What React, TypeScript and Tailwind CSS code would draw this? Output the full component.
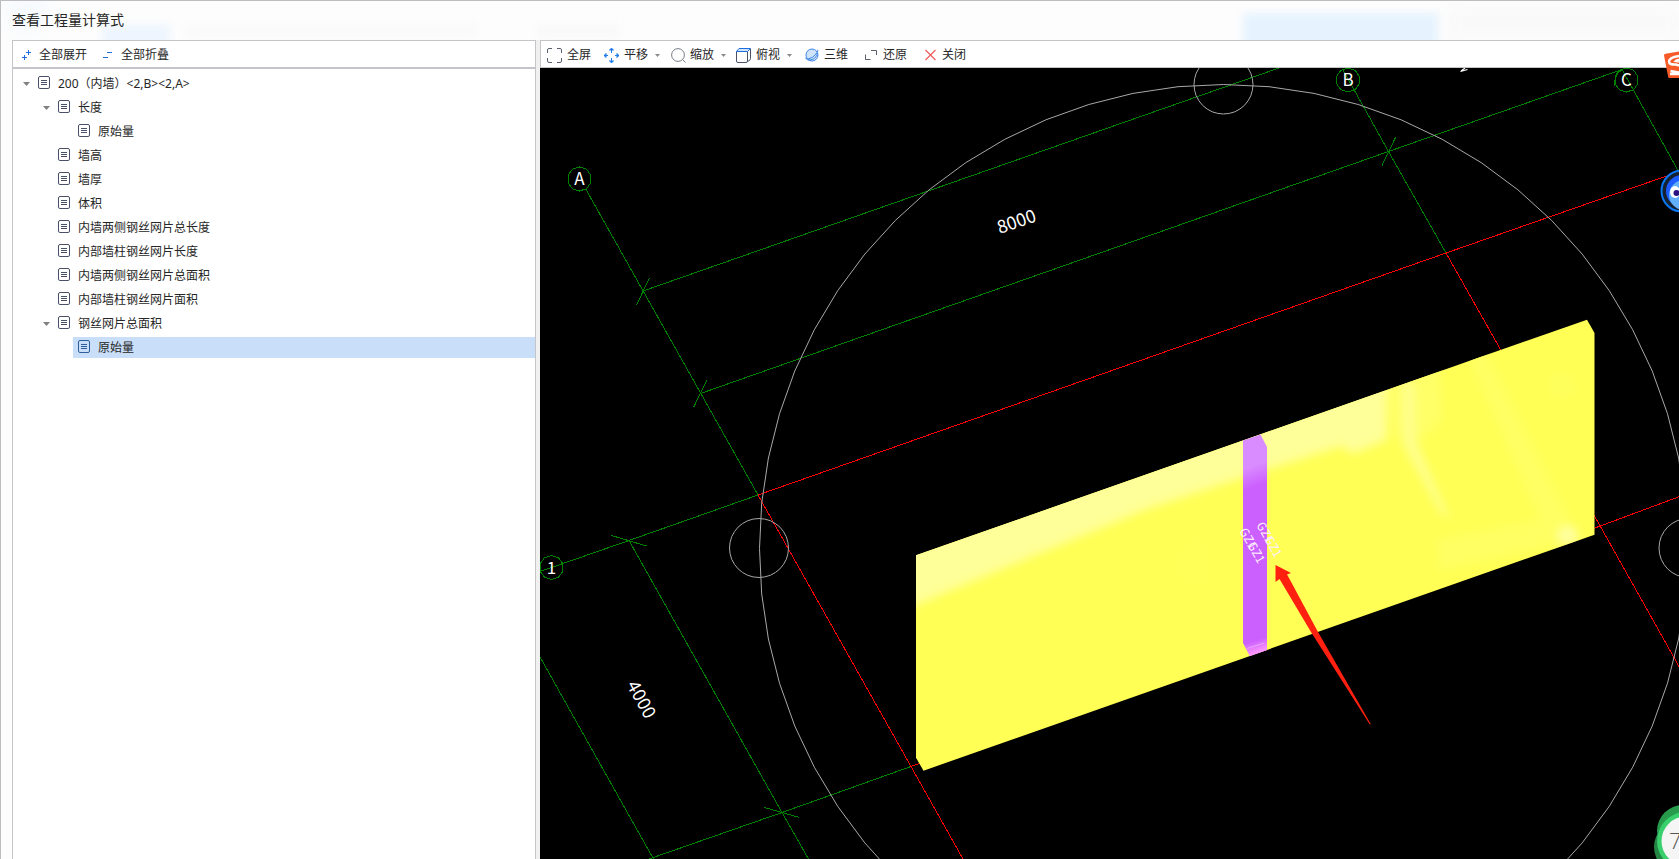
import React, { useState } from "react";

interface TreeNode {
  id: number;
  title: string;
  children?: TreeNode[];
}

const treeData: TreeNode[] = [
  {
    id: 1,
    title: "200（内墙）<2,B><2,A>",
    children: [
      { id: 2, title: "长度", children: [{ id: 3, title: "原始量" }] },
      { id: 4, title: "墙高" },
      { id: 5, title: "墙厚" },
      { id: 6, title: "体积" },
      { id: 7, title: "内墙两侧钢丝网片总长度" },
      { id: 8, title: "内部墙柱钢丝网片长度" },
      { id: 9, title: "内墙两侧钢丝网片总面积" },
      { id: 10, title: "内部墙柱钢丝网片面积" },
      { id: 11, title: "钢丝网片总面积", children: [{ id: 12, title: "原始量" }] },
    ],
  },
];

const parentIds = [1, 2, 11];

const FileIcon = ({ active }: { active: boolean }) => (
  <svg
    width="12"
    height="13"
    viewBox="0 0 12 13"
    fill="none"
    stroke={active ? "#2f5f9a" : "#4a5068"}
    className="mb-[2px] shrink-0"
  >
    <rect x="0.5" y="0.5" width="11" height="12" rx="1.5" />
    <path d="M3 4.5h6M3 6.5h6M3 8.5h6" />
  </svg>
);

const Caret = () => (
  <svg width="5" height="3" viewBox="0 0 5 3" fill="#8a8a8a" className="ml-[7px]">
    <path d="M0 0h5L2.5 3z" />
  </svg>
);

interface TreeItemProps {
  node: TreeNode;
  closed: number[];
  selected: number;
  onToggle: (id: number) => void;
  onSelect: (id: number) => void;
}
const TreeItem: React.FC<TreeItemProps> = (props) => {
  const { node, closed, selected, onToggle, onSelect } = props;
  const isOpen = !closed.includes(node.id);
  const isActive = selected === node.id;

  return (
    <li role="treeitem" aria-selected={isActive}>
      <div className="mb-[3px] flex h-[21px] items-center">
        <div className="flex w-5 shrink-0 justify-end">
          {node.children && (
            <button aria-label="toggle" className="py-1 pr-[3px]" onClick={() => onToggle(node.id)}>
              <svg width="7" height="4" viewBox="0 0 7 4" fill="#808080">
                <path d="M0 0h7L3.5 4z" />
              </svg>
            </button>
          )}
        </div>
        <button
          className={`flex h-full flex-1 items-center gap-2 pl-[5px] text-left ${
            isActive ? "bg-[#c9dff9]" : ""
          }`}
          onClick={() => onSelect(node.id)}
        >
          <FileIcon active={isActive} />
          <span className="whitespace-nowrap">{node.title}</span>
        </button>
      </div>
      {node.children && isOpen && (
        <ul role="group" className="pl-5">
          {node.children.map((child) => (
            <TreeItem {...props} key={child.id} node={child} />
          ))}
        </ul>
      )}
    </li>
  );
};

const Toolbar = () => (
  <div className="flex h-7 shrink-0 items-center border-y border-l border-[#c3c5c9] bg-white pt-[2px] pl-[6px]">
    <button className="mr-[13px] flex items-center gap-[5px]">
      <svg width="15" height="15" viewBox="0 0 15 15" fill="none" stroke="#5a5f6e">
        <path d="M.5 5V2Q.5.5 2 .5H5M10 .5h3Q14.500.5 14.500 2V5M14.500 10v3q0 1.500-1.500 1.500H10M5 14.500H2Q.5 14.500.5 13V10" />
      </svg>
      全屏
    </button>
    <button className="mr-[11px] flex items-center">
      <svg
        width="15"
        height="15"
        viewBox="0 0 15 15"
        fill="none"
        stroke="#1e7be8"
        className="mr-[5px]"
      >
        <path d="M5.500 2.500l2-2 2 2M5.500 12.500l2 2 2-2M2.500 5.500l-2 2 2 2M12.500 5.500l2 2-2 2" strokeWidth="1.300" />
        <path d="M7.500 1v4M7.500 10v4M1 7.500h3M11 7.500h3" />
      </svg>
      平移
      <Caret />
    </button>
    <button className="mr-[10px] flex items-center">
      <svg
        width="15"
        height="15"
        viewBox="0 0 15 15"
        fill="none"
        stroke="#777d88"
        className="mr-1"
      >
        <circle cx="7" cy="7" r="6.400" />
        <path d="M11.500 11.500l3 3" />
      </svg>
      缩放
      <Caret />
    </button>
    <button className="mr-[13px] flex items-center">
      <svg
        width="15"
        height="15"
        viewBox="0 0 15 15"
        fill="none"
        stroke="#4a5068"
        className="mr-[5px]"
      >
        <path d="M.5 3.500h11v9.500q0 1.500-1.500 1.500H2Q.5 14.500.5 13zM11.500 13.500q3-1 3-3V1" />
        <path d="M.5 3.500L3 .5h11.500l-3 3z" fill="#cfe3fb" stroke="#1e6fdc" />
      </svg>
      俯视
      <Caret />
    </button>
    <button className="mr-[17px] flex items-center gap-[5px]">
      <svg width="14" height="14" viewBox="0 0 14 14" fill="none" stroke="#3f86e6">
        <circle cx="7" cy="7" r="6" fill="#cfe3fb" />
        <path d="M1 9.500q-1 2 2 1.500Q8 10 11 6T12.500 2" />
        <path d="M2.500 12Q10 12.500 12.500 6" />
      </svg>
      三维
    </button>
    <button className="mr-[18px] flex items-center gap-[6px]">
      <svg width="12" height="12" viewBox="0 0 12 12" fill="none" stroke="#5a5f6e">
        <path d="M.5 5.500v5h5M6 1.500h5.500V6" />
      </svg>
      还原
    </button>
    <button className="flex items-center gap-[6px]">
      <svg width="11" height="12" viewBox="0 0 11 12" fill="none" stroke="#f05a5a">
        <path d="M.5 1l10 10M10.500 1L.5 11" strokeWidth="1.200" />
      </svg>
      关闭
    </button>
  </div>
);

const polygonPoints = (cx: number, cy: number, r: number, sides: number) =>
  Array.from({ length: sides }, (_, i) => {
    const angle = (i / sides) * Math.PI * 2;
    return `${(cx + r * Math.sin(angle)).toFixed(1)},${(cy - r * Math.cos(angle)).toFixed(1)}`;
  }).join(" ");

const axisLabels = [
  { name: "A", x: 579.5, y: 179 },
  { name: "B", x: 1348, y: 80 },
  { name: "C", x: 1626.5, y: 80 },
  { name: "1", x: 551.5, y: 567.5 },
];

const columnLabels = [
  { x: 1239, y: 531 },
  { x: 1247, y: 545 },
  { x: 1256, y: 525 },
  { x: 1264, y: 539 },
];

const Scene = () => (
  <svg
    viewBox="540 68 1139 791"
    preserveAspectRatio="xMidYMid slice"
    className="block h-full w-full bg-black"
    fontFamily="'Noto Sans CJK SC', sans-serif"
  >
    <defs>
      <clipPath id="wall">
        <path d="M916 555.300L1587 319.700L1594.500 333V534.700L923.500 770.700L916 757.700z" />
      </clipPath>
      <linearGradient id="column" gradientUnits="userSpaceOnUse" x1="1240" y1="434" x2="1315" y2="648">
        <stop offset="0.150" stopColor="#d98cff" />
        <stop offset="0.240" stopColor="#cc60ff" />
      </linearGradient>
      <linearGradient id="foot" gradientUnits="userSpaceOnUse" x1="1254" y1="641" x2="1258" y2="653">
        <stop offset="0" stopColor="#ff99ff" stopOpacity="0" />
        <stop offset="1" stopColor="#ff99ff" />
      </linearGradient>
      <filter id="soft" x="-20%" y="-20%" width="140%" height="140%">
        <feGaussianBlur stdDeviation="5" />
      </filter>
    </defs>

    {/* axis grid */}
    <g fill="none" stroke="#008000" shapeRendering="crispEdges">
      <path d="M586 189.500L758 495M643 291L1279 68M700.500 393.500L1388.500 151.500L1622 69.500" />
      <path d="M649.500 278L636.500 305M707 380L693.500 407.500M1395.500 137.500L1382 165.500" />
      <path d="M1342.500 69L1388.500 151.500L1446 253M1622 69.500L1681 176" />
      <path d="M540 571.500L629 540.500L758 495M629 540.500L782 812.500L808.500 859" />
      <path d="M540 657L653.500 859M649 859L782 812.500L911 766.500" />
      <path d="M611.500 535.500L646.500 546M764.500 807.500L799.500 817.500" />
      <path d="M1622 69.500Q1613 76 1615 86" />
    </g>
    <g fill="none" stroke="#ff0000" shapeRendering="crispEdges">
      <path d="M758 495L1446 253L1681 171M758 495L911 766.500L963 859" />
      <path d="M1446 253L1599 524L1681 670M911 766.500L1599 526.500L1681 496" />
    </g>
    <g fill="none" stroke="#a8a8a8">
      <polygon points={polygonPoints(1223.500, 548.500, 464, 64)} />
      <polygon points={polygonPoints(1223.500, 84.500, 29.500, 32)} />
      <polygon points={polygonPoints(759, 548, 29.500, 32)} />
      <polygon points={polygonPoints(1688.500, 548, 29.500, 32)} />
    </g>

    {axisLabels.map((item) => (
      <g key={item.name}>
        <polygon
          points={polygonPoints(item.x, item.y, 12, 10)}
          fill="none"
          stroke="#008000"
          shapeRendering="crispEdges"
        />
        <text x={item.x} y={item.y + 6} fontSize="17" fill="#fff" textAnchor="middle">
          {item.name}
        </text>
      </g>
    ))}
    <g fontSize="18" fill="#fff" textAnchor="middle">
      <text transform="translate(1018.500 227.500) rotate(-19.300)">8000</text>
      <text transform="translate(636 702.500) rotate(61)">4000</text>
    </g>
    <path d="M1461 71l4-3M1460.500 71.500l7-2" stroke="#fff" strokeWidth="1.200" />

    {/* wall with its sheen */}
    <g clipPath="url(#wall)">
      <rect x="900" y="300" width="710" height="480" fill="#ffff55" />
      <g filter="url(#soft)">
        <path
          d="M900 540L1387 370V440L1352 454L1342 446L1260 472L1150 508L1000 570L900 612z"
          fill="#ffff99"
        />
        <path d="M1387 360H1440L1442 420L1420 440L1395 436z" fill="#ffff68" />
        <path d="M1402 370L1415 390L1416 440L1450 520L1440 512L1403 445z" fill="#ffff8c" />
        <path d="M1465 350H1485L1580 540L1440 570L1436 540L1540 520z" fill="#ffff63" />
        <circle cx="1563" cy="386" r="14" fill="#ffff5c" />
        <circle cx="1568" cy="536" r="10" fill="#ffffa0" />
        <path d="M1170 560L1200 530L1215 580L1190 590z" fill="#ffff59" />
      </g>
    </g>
    <path d="M1243 440.500L1260.500 434.500L1267 447V650L1250 656L1243 643z" fill="url(#column)" />
    <path d="M1243 632H1267V650L1250 656L1243 643z" fill="url(#foot)" />
    <path d="M1247 648.500L1264 643" stroke="#e9a6ff" />
    {columnLabels.map((item) => (
      <text
        key={item.x}
        transform={`translate(${item.x} ${item.y}) rotate(60)`}
        fontSize="12"
        fill="#fff0ff"
      >
        GZ1
      </text>
    ))}

    <path
      d="M1275.500 565L1291 573L1287 574.500L1289 578L1318 632L1371 724.500L1369.500 724L1311 632L1279.500 579L1275.500 582z"
      fill="#ff2010"
    />
  </svg>
);

// desktop helpers docked half off the right edge
const DockedIcons = () => (
  <>
    <svg viewBox="0 0 15 28" className="absolute top-[49px] right-0 h-7 w-[15px]">
      <path d="M0 5.500Q0 4 1.500 3.700L15 1.500V29L5.500 28.500Q4.500 28.300 4.200 27z" fill="#f65a26" />
      <path
        d="M15 6Q5 7.500 5 11.500q0 3.500 7 3L15 15.500M15 10q-2 0-3 1L15 11.500M6.500 21L15 22.500M6 24L15 24"
        fill="none"
        stroke="#fff"
        strokeWidth="2.500"
      />
    </svg>
    <svg viewBox="0 0 19 44" className="absolute top-[168px] right-0 h-11 w-[19px]">
      <circle cx="22" cy="22" r="20.500" fill="#15212f" stroke="#0a78f5" strokeWidth="2" />
      <circle cx="22" cy="22" r="16" fill="#1c5cff" />
      <circle cx="24" cy="26" r="15" fill="#62b0fa" />
      <ellipse cx="15" cy="23" rx="5" ry="6" fill="#fff" />
      <circle cx="16.500" cy="24" r="3" fill="#2a1280" />
    </svg>
    <svg viewBox="0 0 25 54" className="absolute right-0 bottom-0 h-[54px] w-[25px]">
      <circle cx="29" cy="26" r="26" fill="#289a4c" />
      <circle cx="27" cy="42" r="27" fill="#248544" />
      <circle cx="32" cy="36" r="29" fill="#38cf6c" />
      <circle cx="32" cy="36" r="24.500" fill="#f5f5f5" />
      <text x="15" y="44" fontSize="22" fill="#555" fontFamily="'Open Sans', sans-serif" fontWeight="300">
        7
      </text>
    </svg>
  </>
);

const App: React.FC = () => {
  const [closed, setClosed] = useState<number[]>([]);
  const [selected, setSelected] = useState(12);

  const handleToggle = (id: number) => {
    setClosed(closed.includes(id) ? closed.filter((item) => item !== id) : [...closed, id]);
  };

  return (
    <div className="relative flex h-screen flex-col overflow-hidden border-t border-l border-[#bdbdbf] bg-[#fdfdfd] font-['Noto_Sans','Noto_Sans_CJK_SC',sans-serif] text-xs text-[#262626]">
      <header className="relative flex h-[39px] shrink-0 items-center overflow-hidden pb-[2px] pl-[11px]">
        {/* frosted title bar */}
        <div className="absolute top-3 left-[74%] h-10 w-[195px] bg-[#e6f3fe] blur-xs" />
        <div className="absolute top-[24px] left-[6%] h-5 w-[68px] bg-[#edf5fe] blur-xs" />
        <div className="absolute top-0 left-3 h-6 w-7 bg-[#eef7fe] blur-md" />
        <div className="absolute top-6 left-[11%] h-3 w-[290px] bg-[#f9f9f9] blur-xs" />
        <div className="absolute top-6 left-[32%] h-3 w-[80px] bg-[#f8f8f8] blur-xs" />
        <div className="absolute top-[6px] right-0 h-7 w-[230px] bg-[#f9f9f9] blur-sm" />
        <h1 className="relative text-sm">查看工程量计算式</h1>
      </header>
      <div className="flex min-h-0 flex-1">
        <aside className="ml-[11px] flex w-[524px] shrink-0 flex-col border border-b-0 border-[#c3c5c9] bg-white">
          <div className="flex h-7 shrink-0 items-center gap-4 border-b-2 border-[#c3c5c9] pt-[2px] pl-[9px]">
            <button className="flex items-center gap-[7px]" onClick={() => setClosed([])}>
              <svg width="10" height="10" viewBox="0 0 10 10" stroke="#1e6fdc">
                <path d="M0 7.500h5M2.500 5v5M4 2.500h5M6.500 0v5" />
              </svg>
              全部展开
            </button>
            <button className="flex items-center gap-2" onClick={() => setClosed(parentIds)}>
              <svg width="10" height="10" viewBox="0 0 10 10" stroke="#1e6fdc">
                <path d="M0 7.500h5M4 2.500h5" />
              </svg>
              全部折叠
            </button>
          </div>
          <ul role="tree" className="flex-1 overflow-hidden pt-1">
            {treeData.map((node) => (
              <TreeItem
                key={node.id}
                node={node}
                closed={closed}
                selected={selected}
                onToggle={handleToggle}
                onSelect={setSelected}
              />
            ))}
          </ul>
        </aside>
        <main className="flex min-w-0 flex-1 flex-col border-l-4 border-[#f0f0f0]">
          <Toolbar />
          <div className="min-h-0 flex-1">
            <Scene />
          </div>
        </main>
      </div>
      <DockedIcons />
    </div>
  );
};

export default App;
